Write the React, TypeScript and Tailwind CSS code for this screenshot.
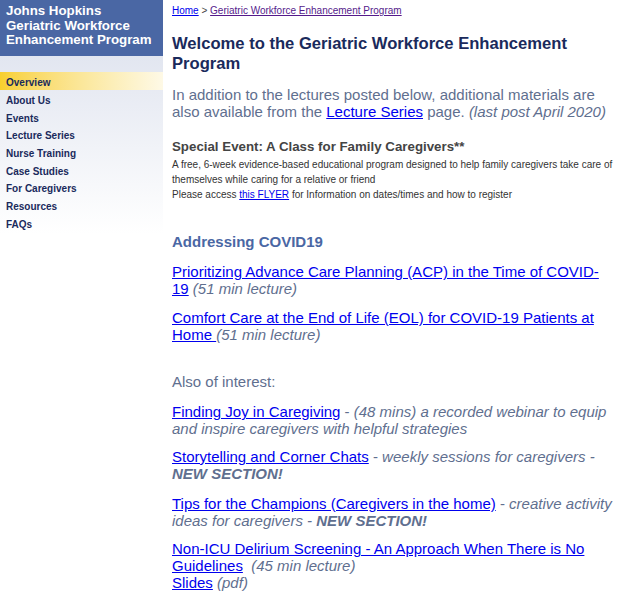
import React from "react";

const navItems = [
  "About Us",
  "Events",
  "Lecture Series",
  "Nurse Training",
  "Case Studies",
  "For Caregivers",
  "Resources",
  "FAQs",
];

export default function App() {
  return (
    <div
      className="flex w-[622px] min-h-[600px] bg-white overflow-hidden"
      style={{ fontFamily: '"Liberation Sans", Arial, sans-serif' }}
    >
      <aside className="w-[163px] shrink-0">
        <div className="bg-[#4a67a4] h-[56px] pl-[6px] pt-[4px] text-white font-bold text-[13.3px] leading-[14.6px]">
          Johns Hopkins
          <br />
          Geriatric Workforce
          <br />
          Enhancement Program
        </div>
        <div className="bg-gradient-to-b from-[#e2e6f0] to-white h-[178px]">
          <div className="h-[16px]" />
          <div className="h-[18px] pl-[6px] text-[10px] leading-[21px] font-bold text-[#1a2a5c] bg-gradient-to-r from-[#f8d02c] via-[#fbe79a] to-[#fef9e6]">
            Overview
          </div>
          {navItems.map((n) => (
            <div
              key={n}
              className="h-[17.7px] pl-[6px] text-[10px] leading-[21.5px] font-bold text-[#1a2a5c]"
            >
              {n}
            </div>
          ))}
        </div>
      </aside>
      <main className="pl-[9px] pr-0 w-[451px] shrink-0 text-[#5f6f8f]">
        <div className="text-[10px] leading-[12px] pt-[5px] text-[#444]">
          <a href="#" className="underline text-[#0000ee]">Home</a> &gt;{" "}
          <a href="#" className="underline text-[#551a8b]">
            Geriatric Workforce Enhancement Program
          </a>
        </div>
        <h1 className="mt-[17px] text-[16.6px] leading-[20px] font-bold text-[#1a2a5c]">
          Welcome to the Geriatric Workforce Enhancement Program
        </h1>
        <p className="mt-[12px] text-[15px] leading-[17px]">
          In addition to the lectures posted below, additional materials are
          also available from the{" "}
          <a href="#" className="underline text-[#0000ee]">Lecture Series</a>{" "}
          page. <i>(last post April 2020)</i>
        </p>
        <h2 className="mt-[19px] text-[13.3px] leading-[16px] font-bold text-[#444]">
          Special Event: A Class for Family Caregivers**
        </h2>
        <p className="mt-[2px] text-[10px] leading-[15px] text-[#333]">
          A free, 6-week evidence-based educational program designed to help
          family caregivers take care of themselves while caring for a relative
          or friend
          <br />
          Please access{" "}
          <a href="#" className="underline text-[#0000ee]">this FLYER</a> for
          Information on dates/times and how to register
        </p>
        <h2 className="mt-[31px] text-[15px] leading-[18px] font-bold text-[#4a67a4]">
          Addressing COVID19
        </h2>
        <p className="mt-[12px] text-[15px] leading-[17px]">
          <a href="#" className="underline text-[#0000ee]">
            Prioritizing Advance Care Planning (ACP) in the Time of COVID-19
          </a>{" "}
          <i>(51 min lecture)</i>
        </p>
        <p className="mt-[12px] text-[15px] leading-[17px]">
          <a href="#" className="underline text-[#0000ee]">
            Comfort Care at the End of Life (EOL) for COVID-19 Patients at Home{" "}
          </a>
          <i>(51 min lecture)</i>
        </p>
        <p className="mt-[30px] text-[15px] leading-[17px]">Also of interest:</p>
        <p className="mt-[13px] text-[15px] leading-[17px]">
          <a href="#" className="underline text-[#0000ee]">
            Finding Joy in Caregiving
          </a>{" "}
          - <i>(48 mins) a recorded webinar to equip and inspire caregivers with helpful strategies</i>
        </p>
        <p className="mt-[11px] text-[15px] leading-[17px]">
          <a href="#" className="underline text-[#0000ee]">
            Storytelling and Corner Chats
          </a>{" "}
          - <i>weekly sessions for caregivers - <b>NEW SECTION!</b></i>
        </p>
        <p className="mt-[13px] text-[15px] leading-[17px]">
          <a href="#" className="underline text-[#0000ee]">
            Tips for the Champions (Caregivers in the home)
          </a>{" "}
          - <i>creative activity ideas for caregivers - <b>NEW SECTION!</b></i>
        </p>
        <p className="mt-[11px] text-[15px] leading-[17px]">
          <a href="#" className="underline text-[#0000ee]">
            Non-ICU Delirium Screening - An Approach When There is No Guidelines
          </a>{" "}
          &nbsp;<i>(45 min lecture)</i>
          <br />
          <a href="#" className="underline text-[#0000ee]">Slides</a>{" "}
          <i>(pdf)</i>
        </p>
      </main>
    </div>
  );
}
